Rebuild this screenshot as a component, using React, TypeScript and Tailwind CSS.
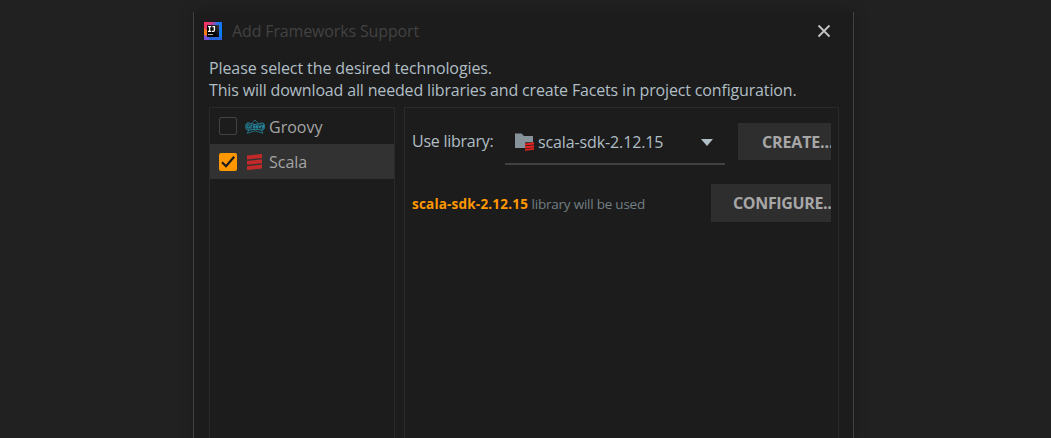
import React from "react";

function IdeaLogo() {
  return (
    <svg width="18" height="18" viewBox="0 0 18 18" className="shrink-0">
      <defs>
        <linearGradient id="ring" x1="0" y1="0.3" x2="1" y2="0.5">
          <stop offset="0" stopColor="#fe315d" />
          <stop offset="0.4" stopColor="#c0418f" />
          <stop offset="0.65" stopColor="#2b6fe8" />
          <stop offset="1" stopColor="#087cfa" />
        </linearGradient>
        <linearGradient id="core" x1="1" y1="0" x2="0" y2="1">
          <stop offset="0" stopColor="#3a3a3a" />
          <stop offset="0.6" stopColor="#000" />
        </linearGradient>
      </defs>
      <rect width="18" height="18" fill="url(#ring)" />
      <path d="M0 6 L4 9 L3 14 L0 13Z" fill="#f97a12" />
      <path d="M0 13 L3 14 L9 18 H0Z" fill="#7b50d8" />
      <path d="M5 15 H18 V18 H5Z" fill="#2a66e0" />
      <rect x="3" y="3" width="12" height="12" fill="url(#core)" />
      <path d="M4 4.6H7.2M5.6 4.6V9.2M4 9.4H7.2M8.4 4.6H10.4V8Q10.4 9.4 9.4 9.4H7.9" stroke="#fff" strokeWidth="1.3" fill="none" />
      <rect x="4" y="12" width="5" height="1" fill="#aaa" />
    </svg>
  );
}

function GroovyIcon() {
  return (
    <svg width="20" height="16" viewBox="0 0 20 16" className="shrink-0" fill="none" stroke="#268ba5">
      <path d="M6.5 4.8L10 1 13.5 4.8M3.8 11L2.2 14.3 10 11.8 17.8 14.3 16.2 11" strokeWidth=".9" opacity=".8" />
      <path d="M1 5Q3 2.6 5.5 4.6 10 6.4 14.5 4.6 17 2.8 19.2 5L19.4 9.6Q18 12.6 15.4 10.8 10 9.8 5 11 1.4 12 .8 9Z" strokeWidth=".9" fill="#268ba5" fillOpacity=".25" />
      <path d="M4.4 6Q2 5.4 2 7.6T4.4 9V7.6M5.8 9.6V6.6H7.2M8.6 6.8V9H10V6.8ZM11.4 6.8V9H12.7V6.8ZM13.8 6.3L14.8 9 15.9 6.3M17 6V8H18.5V6M18.5 8Q18.5 10.2 17 9.8" strokeWidth="1" />
    </svg>
  );
}

function ScalaIcon() {
  return (
    <svg width="15" height="16" viewBox="0 0 15 16" className="shrink-0" fill="#c22a2a">
      <path d="M0 1.5L15 0V4L0 5.4ZM0 6.9L15 5.3V9.3L0 10.8ZM0 12.2L15 10.6V14.6L0 16Z" />
    </svg>
  );
}

function LibraryIcon() {
  return (
    <svg width="19" height="18" viewBox="0 0 19 18" className="shrink-0">
      <path d="M0 .5H6.5L9 3H18V9.3H10.3V15H0Z" fill="#87939a" />
      <path d="M10 10.4L19 9.2V11.4L10 12.5ZM10 13.3L19 12.2V14.4L10 15.4ZM10 16.2L19 15.1V16.7L10 17.8Z" fill="#e32222" />
    </svg>
  );
}

export default function App() {
  return (
    <div className="flex h-[438px] w-[1051px] flex-col items-center overflow-hidden bg-[#212121] pt-3 font-['Open_Sans','Noto_Sans',sans-serif] text-[16px] text-[#b0bec5]">
      <div className="mr-[4px] flex h-[426px] w-[661px] flex-col border-x border-[#424242] bg-[#1c1c1c] shadow-[0_0_14px_rgba(0,0,0,0.22)]">
        <header className="flex h-[38px] shrink-0 items-center pl-[10px] pr-[22px] text-[#424242]">
          <IdeaLogo />
          <span className="ml-[10px] whitespace-nowrap tracking-[-0.14px]">Add Frameworks Support</span>
          <svg width="14" height="14" viewBox="0 0 14 14" className="ml-auto" stroke="#c4c4c4" strokeWidth="1.8">
            <path d="M1.5 1.5L12.5 12.5M12.5 1.5L1.5 12.5" />
          </svg>
        </header>
        <div className="flex h-[57px] shrink-0 flex-col whitespace-nowrap pl-[15px] pt-[7px] leading-[22px]">
          <p className="tracking-[-0.1px]">Please select the desired technologies.</p>
          <p className="tracking-[-0.16px]">This will download all needed libraries and create Facets in project configuration.</p>
        </div>
        <main className="flex min-h-0 flex-1 gap-[9px] pl-[15px] pr-[14px]">
          <section className="w-[186px] border-x border-t border-[#2a2a2a] text-[#a5a5a5]">
            <div className="flex h-9 items-center pl-[9px]">
              <span className="h-[18px] w-[18px] rounded-[2px] border border-[#424242]" />
              <span className="ml-[8px] flex pt-px"><GroovyIcon /></span>
              <span className="ml-[4px] pt-px">Groovy</span>
            </div>
            <div className="flex h-[35px] items-center bg-[#323232] pl-[9px]">
              <svg width="18" height="18" viewBox="0 0 18 18">
                <rect width="18" height="18" rx="2" fill="#ff9800" />
                <path d="M3 9.3L7 13.2L15.2 3.8" fill="none" stroke="#1c1c1c" strokeWidth="2.3" />
              </svg>
              <span className="ml-[10px] flex"><ScalaIcon /></span>
              <span className="ml-[7px]">Scala</span>
            </div>
          </section>
          <section className="flex min-w-0 flex-1 flex-col border-x border-t border-[#2a2a2a] pl-[7px] pr-[7px] pt-[15px]">
            <div className="flex h-[42px]">
              <span className="w-[93px] shrink-0 whitespace-nowrap pt-[7px] leading-[22px] tracking-[-0.25px]">Use library:</span>
              <div className="flex h-[42px] w-[220px] shrink-0 items-center border-b-2 border-[#424242] pb-[2px] pl-[10px] pr-[12px]">
                <LibraryIcon />
                <span className="ml-[4px] whitespace-nowrap tracking-[-0.12px]">scala-sdk-2.12.15</span>
                <svg width="12" height="7" viewBox="0 0 12 7" className="ml-auto" fill="#b0bec5"><path d="M0 0H12L6 7Z" /></svg>
              </div>
              <button className="ml-auto h-[37px] w-[93px] overflow-hidden whitespace-nowrap bg-[#2e2e2e] pl-6 text-left font-bold tracking-[-0.15px] text-[#a7a7a7]">CREATE...</button>
            </div>
            <div className="mt-[19px] flex h-[38px] items-center justify-between">
              <p className="whitespace-nowrap pt-[2px] text-[13.5px] text-[#727f85]">
                <b className="tracking-[0.2px] text-[#ff9800]">scala-sdk-2.12.15</b> <span className="tracking-[-0.23px]">library will be used</span>
              </p>
              <button className="h-[38px] w-[120px] overflow-hidden whitespace-nowrap bg-[#2e2e2e] pl-[22px] text-left font-bold tracking-[-0.35px] text-[#a7a7a7]">CONFIGURE...</button>
            </div>
          </section>
        </main>
      </div>
    </div>
  );
}
